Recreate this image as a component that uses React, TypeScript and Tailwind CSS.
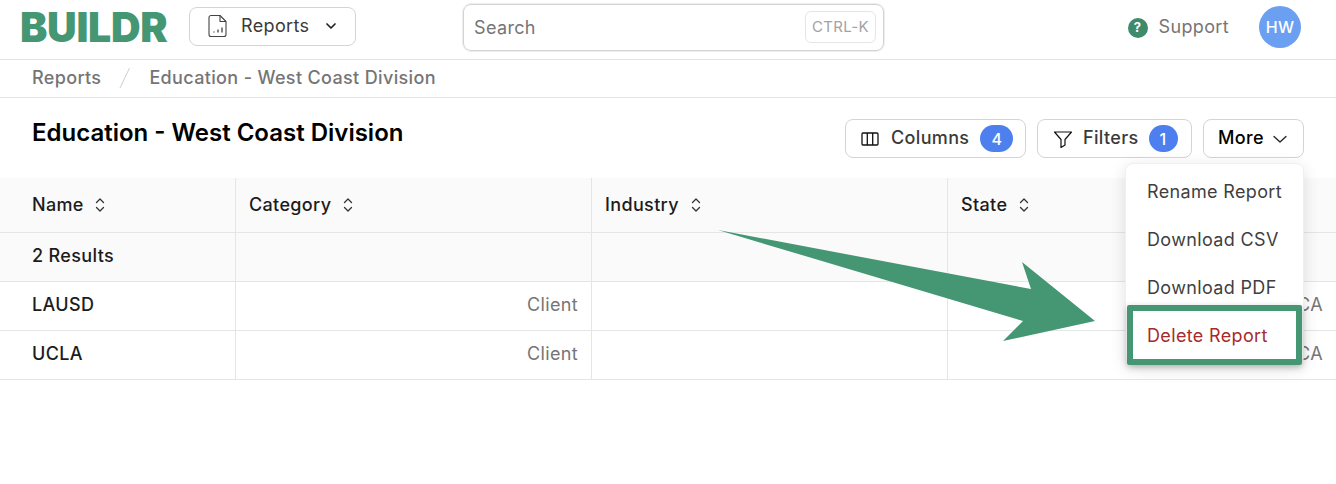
import React from "react";

const font = { fontFamily: "Inter, 'Noto Sans', sans-serif" };

function Sort() {
  return (
    <svg className="mt-[1px]" width="12" height="18" viewBox="0 0 12 18" fill="none" stroke="#333" strokeWidth="1.3" strokeLinecap="round" strokeLinejoin="round">
      <path d="M2.5 6.5 6 3l3.5 3.5" />
      <path d="M2.5 11.5 6 15l3.5-3.5" />
    </svg>
  );
}

function HeadCell({ label, last }: { label: string; last?: boolean }) {
  return (
    <div className={`h-[55px] flex items-center ${label === "Name" ? "gap-[10px] pl-8" : "gap-[11px] pl-[13px]"} pb-[2px] bg-[#fafafa] border-b border-[#e5e5e5] ${last ? "" : "border-r"} text-[18px] font-medium text-[#1c1c1c]`}>
      <span>{label}</span>
      <Sort />
    </div>
  );
}

function Cell({ children, first, last, shade }: { children?: React.ReactNode; first?: boolean; last?: boolean; shade?: boolean }) {
  return (
    <div className={`h-[49px] flex items-center pb-[4px] border-b border-[#e5e5e5] ${last ? "" : "border-r"} ${shade ? "bg-[#fafafa]" : "bg-white"} ${first ? "pl-8 font-medium text-[#1c1c1c]" : "justify-end pr-[13px] text-[#757575]"} text-[18px]`}>
      {children}
    </div>
  );
}

function Row({ name }: { name: string }) {
  return (
    <>
      <Cell first>{name}</Cell>
      <Cell>Client</Cell>
      <Cell />
      <Cell last>CA</Cell>
    </>
  );
}

export default function App() {
  return (
    <div className="relative w-[1336px] h-[484px] bg-white overflow-hidden tracking-[0.35px]" style={font}>
      <header className="h-[60px] border-b border-[#e3e3e3] flex items-center pl-[20px] pr-[35px]">
        <span className="w-[148px] text-[41px] leading-none font-black tracking-[-0.3px] text-[#459673] -mt-[4px]">BUILDR</span>
        <button className="ml-[21px] -mt-[7px] w-[167px] h-[39px] border border-[#d4d4d4] rounded-lg flex items-center pl-[18px] text-[18px] text-[#3a3a3a]">
          <svg width="20" height="24" viewBox="0 0 20 24" fill="none" stroke="#444" strokeWidth="1.1" strokeLinejoin="round">
            <path d="M3 1.5h9l6 6v13a2 2 0 0 1-2 2H3a2 2 0 0 1-2-2v-17a2 2 0 0 1 2-2z" />
            <path d="M12 1.5v6h6" />
            <path d="M6 18.5v-1M10 18.5v-3M14 18.5v-5" strokeWidth="1.6" stroke="#666" />
          </svg>
          <span className="ml-[13px] mb-[1px]">Reports</span>
          <svg className="ml-[15px]" width="14" height="14" viewBox="0 0 14 14" fill="none" stroke="#222" strokeWidth="1.7" strokeLinecap="round" strokeLinejoin="round">
            <path d="M3 5 7 9 11 5" />
          </svg>
        </button>
        <div className="ml-[107px] -mt-[5px] w-[421px] h-[47px] border border-[#d4d4d4] rounded-lg shadow-[0_0_0_1px_#ededed] flex items-center justify-between pl-[10px] pr-[7px]">
          <span className="text-[18px] text-[#757575]">Search</span>
          <span className="w-[71px] h-[32px] border border-[#e5e5e5] rounded-md flex items-center justify-center text-[15px] text-[#a3a3a3] tracking-[0.3px]">CTRL-K</span>
        </div>
        <div className="ml-auto flex items-center -mt-[6px]">
          <span className="w-5 h-5 mt-[2px] rounded-full bg-[#3f8a6b] text-white text-[13px] font-bold flex items-center justify-center">?</span>
          <span className="ml-[11px] text-[18px] text-[#757575]">Support</span>
          <span className="ml-[30px] w-[42px] h-[42px] rounded-full bg-[#6b9ff2] text-white text-[16px] font-medium flex items-center justify-center">HW</span>
        </div>
      </header>

      <nav className="h-[38px] border-b border-[#e3e3e3] flex items-center pl-8 pb-[2px] text-[18px] font-medium text-[#757575]">
        <span>Reports</span>
        <svg className="mx-[14px]" width="20" height="24" viewBox="0 0 20 24" fill="none" stroke="#cfcfcf" strokeWidth="1">
          <path d="M14.5 2 5 22" />
        </svg>
        <span>Education - West Coast Division</span>
      </nav>

      <section className="h-[80px] flex items-start justify-between pl-8 pr-8">
        <h1 className="mt-[18px] text-[24px] leading-[34px] font-semibold tracking-normal text-black">Education - West Coast Division</h1>
        <div className="mt-[21px] flex gap-[11px] text-[18px]">
          <button className="w-[181px] h-[39px] border border-[#d4d4d4] rounded-lg flex items-center pl-[15px] font-medium text-[#3a3a3a]">
            <svg width="18" height="14" viewBox="0 0 18 14" fill="none" stroke="#111" strokeWidth="1.3">
              <rect x="1" y="1" width="16" height="12" rx="1" />
              <path d="M6.3 1v12M11.7 1v12" />
            </svg>
            <span className="ml-[12px] mb-[2px]">Columns</span>
            <span className="ml-[11px] w-[33px] h-[27px] rounded-full bg-[#4d80ee] text-white text-[16px] flex items-center justify-center">4</span>
          </button>
          <button className="w-[155px] h-[39px] border border-[#d4d4d4] rounded-lg flex items-center pl-[15px] font-medium text-[#3a3a3a]">
            <svg width="20" height="20" viewBox="0 0 20 20" fill="none" stroke="#111" strokeWidth="1.2" strokeLinejoin="round">
              <path d="M1.5 3h17l-6.5 7.5v5.5L8 18.5v-8z" />
            </svg>
            <span className="ml-[10px] mb-[2px]">Filters</span>
            <span className="ml-[10px] w-[29px] h-[27px] rounded-full bg-[#4d80ee] text-white text-[16px] flex items-center justify-center">1</span>
          </button>
          <button className="w-[101px] h-[39px] border border-[#d4d4d4] rounded-lg flex items-center pl-[14px] font-medium text-black">
            <span className="mb-[2px]">More</span>
            <svg className="ml-[8px]" width="16" height="16" viewBox="0 0 16 16" fill="none" stroke="#222" strokeWidth="1.3" strokeLinecap="round" strokeLinejoin="round">
              <path d="M2 5.5 8 11l6-5.5" />
            </svg>
          </button>
        </div>
      </section>

      <div className="grid grid-cols-[236px_356px_356px_1fr]">
        <HeadCell label="Name" />
        <HeadCell label="Category" />
        <HeadCell label="Industry" />
        <HeadCell label="State" last />
        <Cell first shade>2 Results</Cell>
        <Cell shade />
        <Cell shade />
        <Cell shade last />
        <Row name="LAUSD" />
        <Row name="UCLA" />
      </div>

      <div className="absolute left-[1125px] top-[163px] w-[179px] h-[202px] bg-white rounded-lg border border-[#f0f0f0] shadow-[0_4px_16px_rgba(0,0,0,0.12)] pl-[21px] pt-[4px] text-[18px] text-[#3f3f3f]">
        <div className="h-[48px] flex items-center pb-[2px]">Rename Report</div>
        <div className="h-[48px] flex items-center pb-[2px]">Download CSV</div>
        <div className="h-[48px] flex items-center pb-[2px]">Download PDF</div>
        <div className="h-[48px] flex items-center pb-[2px] text-[#a92a2a]">Delete Report</div>
      </div>

      <div className="absolute left-[1127px] top-[305px] w-[175px] h-[60px] border-[6px] border-[#459673] rounded-[2px] shadow-[0_2px_6px_rgba(0,0,0,0.25)]" />

      <svg className="absolute left-0 top-0 pointer-events-none" width="1336" height="484" viewBox="0 0 1336 484">
        <polygon points="718,230 1031,289 1022,262 1095,321 1003,341 1023,321" fill="#459673" />
      </svg>
    </div>
  );
}
